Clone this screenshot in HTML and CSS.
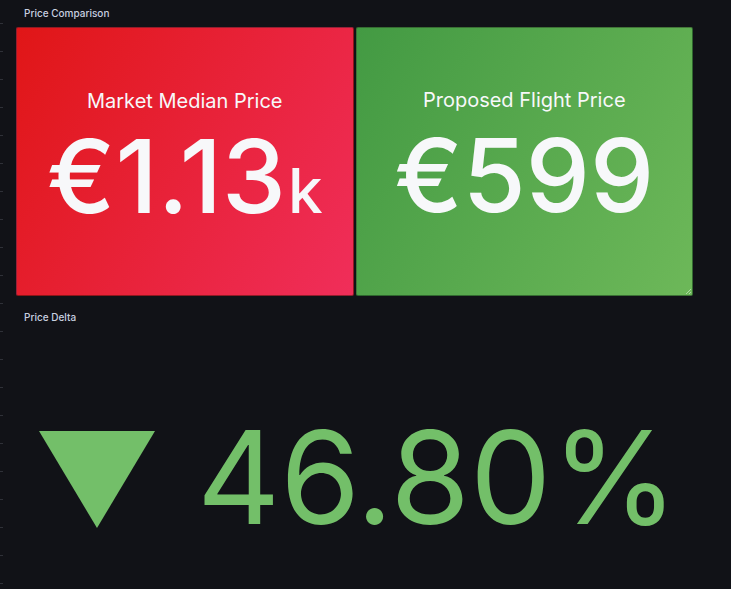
FILE: index.html
```html
<!DOCTYPE html>
<html lang="en">
<head>
<meta charset="utf-8">
<title>Price Comparison</title>
<link rel="stylesheet" href="styles.css">
</head>
<body>
<div class="dashboard">
  <div class="section-title">Price Comparison</div>
  <div class="stat-row">
    <div class="stat stat-red">
      <div class="stat-title">Market Median Price</div>
      <div class="stat-value">€1.13<span class="suffix">k</span></div>
    </div>
    <div class="stat stat-green">
      <div class="stat-title">Proposed Flight Price</div>
      <div class="stat-value">€599</div>
      <svg class="resize-handle" width="8" height="8" viewBox="0 0 8 8">
        <path d="M7 2 L2 7 M7 5 L5 7" stroke="rgba(255,255,255,0.45)" stroke-width="1" fill="none"/>
      </svg>
    </div>
  </div>
  <div class="section-title delta-title">Price Delta</div>
  <div class="delta">
    <svg class="arrow" width="116" height="97" viewBox="0 0 116 97">
      <polygon points="0,0 116,0 58,97" fill="#73bf69"/>
    </svg>
    <div class="delta-value">46.80%</div>
  </div>
</div>
</body>
</html>
```
FILE: styles.css
```css
html, body {
  margin: 0;
  padding: 0;
}
body {
  background-color: #111217;
  min-height: 589px;
  font-family: Inter, "Noto Sans", sans-serif;
  overflow: hidden;
}
.dashboard {
  min-height: 589px;
  padding: 0 38px 0 16px;
  background-image: linear-gradient(to bottom, #2f3138 0, #2f3138 1px, transparent 1px, transparent 28px);
  background-position: 0 51px;
  background-size: 3px 28px;
  background-repeat: repeat-y;
}
.section-title {
  color: #c8d0e0;
  font-size: 10px;
  font-weight: 500;
  line-height: 12px;
  height: 12px;
  padding: 7px 0 8px 8px;
}
.delta-title {
  padding-top: 15px;
  padding-bottom: 0;
}
.stat-row {
  display: flex;
  gap: 2px;
  height: 269px;
}
.stat {
  position: relative;
  flex: 1 1 0;
  display: flex;
  flex-direction: column;
  align-items: center;
  padding-top: 61px;
  box-sizing: border-box;
  border: 1px solid rgba(40, 20, 20, 0.45);
  border-radius: 2px;
  color: #f7f8fa;
}
.stat-red {
  background: linear-gradient(120deg, #e01617 0%, #f02e5a 100%);
}
.stat-green {
  background: linear-gradient(120deg, #439a43 0%, #6db859 100%);
  border-color: rgba(20, 40, 20, 0.45);
}
.stat-title {
  font-size: 20px;
  line-height: 24px;
  font-weight: 400;
  white-space: nowrap;
}
.stat-value {
  margin-top: 12px;
  font-size: 102px;
  line-height: 102px;
  font-weight: 500;
  white-space: nowrap;
}
.suffix {
  font-size: 62px;
  margin-left: 2px;
}
.stat-green .stat-title,
.stat-green .stat-value {
  position: relative;
  top: -1px;
}
.resize-handle {
  position: absolute;
  right: 0;
  bottom: 0;
}
.delta {
  display: flex;
  align-items: flex-start;
  margin-top: 90px;
  padding-left: 23px;
}
.arrow {
  margin-top: 18px;
  flex: none;
}
.delta-value {
  margin-left: 42px;
  font-size: 129px;
  line-height: 128px;
  font-weight: 400;
  color: #73bf69;
  white-space: nowrap;
}
```
